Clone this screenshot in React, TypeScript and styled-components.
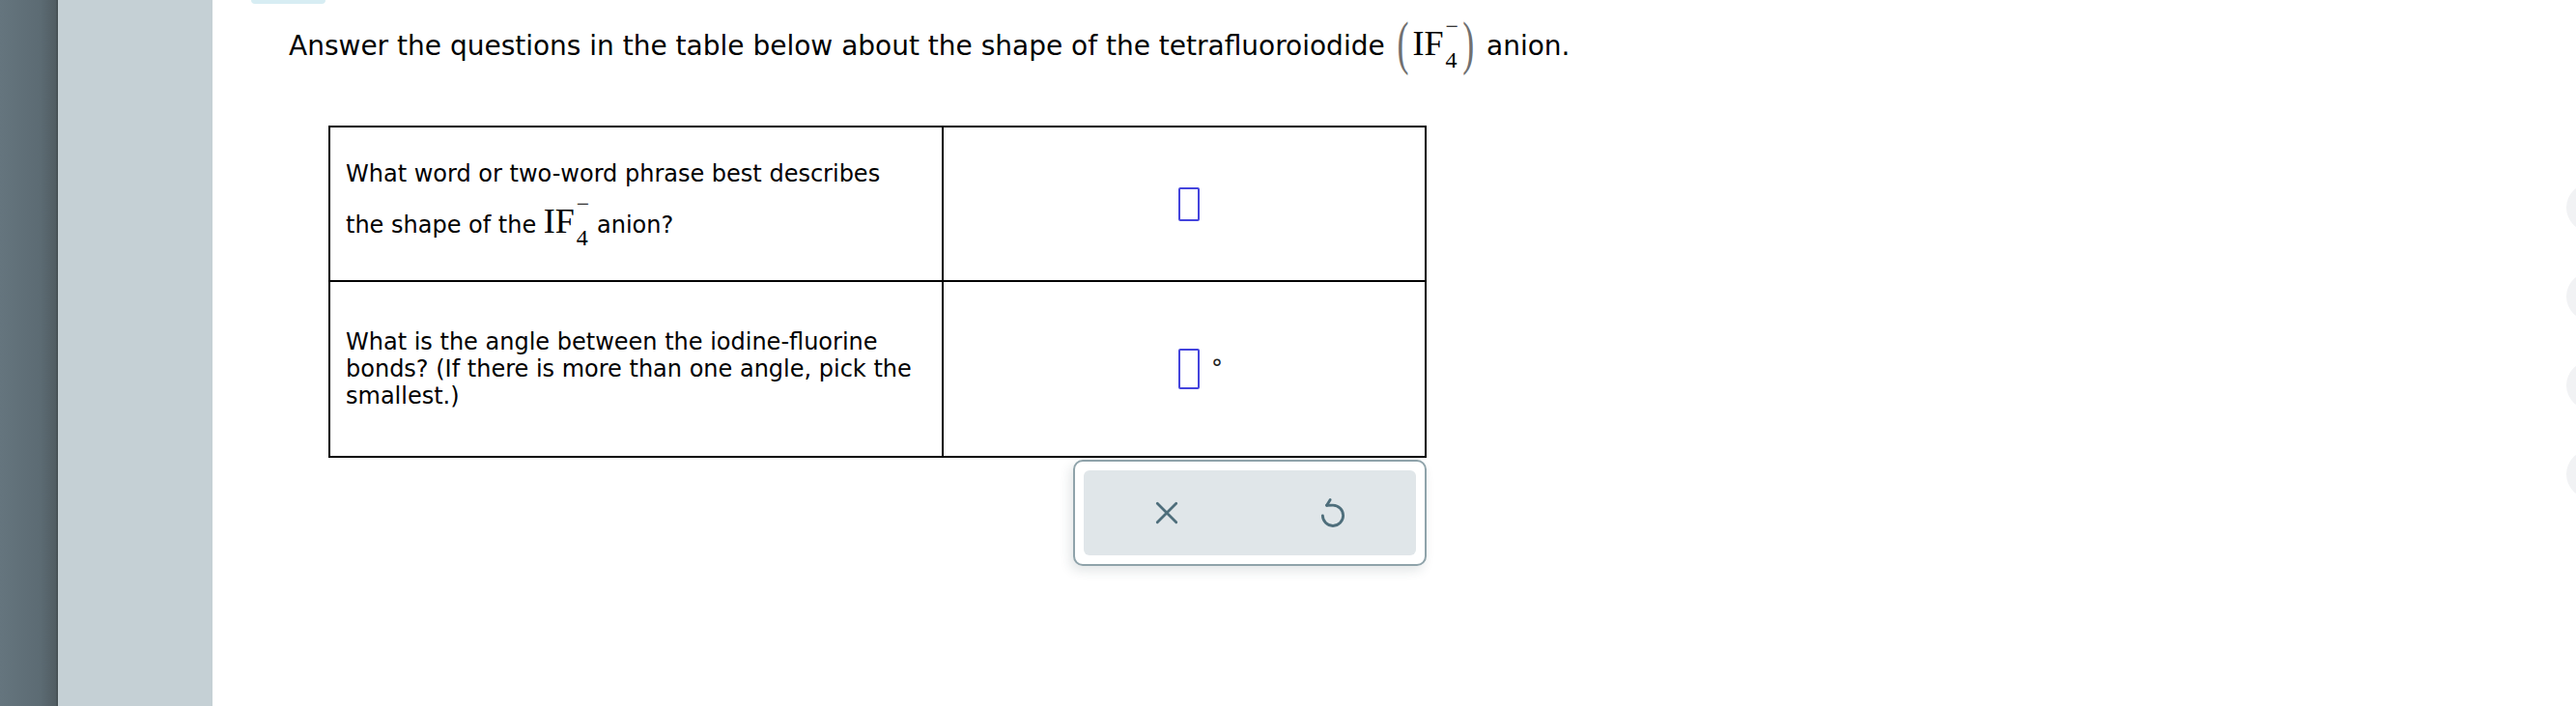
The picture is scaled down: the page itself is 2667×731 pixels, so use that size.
import styled, { createGlobalStyle } from "styled-components";

const GlobalStyle = createGlobalStyle`
    html, body {
        margin: 0;
        padding: 0;
        background: #fff;
        overflow: hidden;
    }
    body {
        font-family: "DejaVu Sans", Verdana, sans-serif;
        color: #000;
    }
`;

const Page = styled.div`
    display: flex;
    width: 2667px;
    height: 731px;
`;

const Rail = styled.div`
    flex: none;
    width: 60px;
    background: linear-gradient(90deg, #65757e 0%, #5c6b73 70%, #515d63 96%, #40494d 100%);
`;

const SidePanel = styled.aside`
    flex: none;
    width: 160px;
    background: #c5d0d5;
`;

const Main = styled.main`
    flex: 1;
    min-width: 0;
    display: flex;
    flex-direction: column;
    align-items: flex-start;
`;

const TopTab = styled.div`
    margin-left: 40px;
    width: 77px;
    height: 4px;
    background: #d7edf3;
    border-radius: 0 0 10px 10px;
`;

const Prompt = styled.p`
    margin: 6px 0 0 79px;
    font-size: 28px;
    line-height: 33px;
`;

const Chem = styled.span`
    font-family: "Liberation Serif", "Times New Roman", serif;
    font-size: 36px;
    white-space: nowrap;
`;

const Paren = styled.span`
    display: inline-block;
    color: #707070;
    transform: scaleY(1.7);
    margin: 0 4px;
`;

const Scripts = styled.span`
    display: inline-block;
    vertical-align: -13px;
    margin-left: 2px;
    padding-top: 6px;
    font-size: 24px;
    line-height: 22px;
`;

const Charge = styled.span`
    display: block;
    margin-bottom: 13px;
`;

const Count = styled.span`
    display: block;
`;

const Content = styled.div`
    margin: 57px 0 0 120px;
    width: 1137px;
    display: flex;
    flex-direction: column;
    align-items: flex-end;
`;

const QuestionTable = styled.table`
    width: 1137px;
    border-collapse: collapse;
    table-layout: fixed;
`;

const Row = styled.tr<{ $height: number }>`
    height: ${(p) => p.$height}px;
`;

const QuestionCell = styled.td`
    width: 593px;
    border: 2px solid #000;
    padding: 0 24px 0 16px;
    font-size: 24px;
    line-height: 28px;
    vertical-align: middle;
`;

const AnswerCell = styled.td`
    border: 2px solid #000;
    padding: 0 0 0 10px;
    vertical-align: middle;
`;

const AnswerSlot = styled.div`
    display: grid;
    grid-template-columns: 1fr auto 1fr;
    align-items: center;
    column-gap: 12px;
`;

const Blank = styled.span<{ $tall?: boolean }>`
    grid-column: 2;
    display: block;
    box-sizing: border-box;
    width: 22px;
    height: ${(p) => (p.$tall ? 42 : 35)}px;
    border: 2px solid #4444dd;
    border-radius: 2px;
`;

const Unit = styled.span`
    grid-column: 3;
    justify-self: start;
    font-size: 24px;
    line-height: 24px;
    color: #222;
`;

const Tray = styled.div`
    margin-top: 2px;
    box-sizing: border-box;
    width: 366px;
    padding: 9px;
    border: 2px solid #8fa3aa;
    border-radius: 10px;
    background: #fff;
    box-shadow: -3px 5px 12px rgba(40, 60, 70, 0.13);
`;

const TrayInner = styled.div`
    display: flex;
    height: 88px;
    background: #e0e6e9;
    border-radius: 6px;
`;

const TrayButton = styled.button`
    flex: 1;
    display: flex;
    align-items: center;
    justify-content: center;
    padding: 0;
    border: 0;
    background: transparent;
    color: #4e6e7b;
    cursor: pointer;
`;

const Dock = styled.div`
    flex: none;
    width: 10px;
    overflow: hidden;
    padding-top: 190px;
    display: flex;
    flex-direction: column;
    align-items: flex-start;
    gap: 42px;
`;

const DockDot = styled.span`
    flex: none;
    width: 50px;
    height: 50px;
    border-radius: 50%;
    background: #f1f2f4;
`;

const Formula = () => (
    <Chem>
        IF
        <Scripts>
            <Charge>−</Charge>
            <Count>4</Count>
        </Scripts>
    </Chem>
);

const ClearIcon = () => (
    <svg width="26" height="26" viewBox="0 0 24 24" fill="none" stroke="currentColor" strokeWidth="2.6" strokeLinecap="round">
        <path d="M3 3L21 21M21 3L3 21" />
    </svg>
);

const UndoIcon = () => (
    <svg width="34" height="34" viewBox="0 0 24 24" fill="none" stroke="currentColor" strokeWidth="2" strokeLinecap="round" strokeLinejoin="round">
        <path d="M4.5 14A7.5 7.5 0 1 0 12 6.5H7.5" />
        <path d="M10 2.5L7.5 6.5" />
    </svg>
);

const App = () => {
    return (
        <>
            <GlobalStyle />
            <Page>
                <Rail />
                <SidePanel />
                <Main>
                    <TopTab />
                    <Prompt>
                        Answer the questions in the table below about the shape of the tetrafluoroiodide{' '}
                        <Chem>
                            <Paren>(</Paren>
                            <Formula />
                            <Paren>)</Paren>
                        </Chem>{' '}
                        anion.
                    </Prompt>
                    <Content>
                        <QuestionTable>
                            <tbody>
                                <Row $height={160}>
                                    <QuestionCell>
                                        What word or two-word phrase best describes the shape of the <Formula /> anion?
                                    </QuestionCell>
                                    <AnswerCell>
                                        <AnswerSlot>
                                            <Blank />
                                        </AnswerSlot>
                                    </AnswerCell>
                                </Row>
                                <Row $height={182}>
                                    <QuestionCell>
                                        What is the angle between the iodine-fluorine bonds? (If there is more than one angle, pick the smallest.)
                                    </QuestionCell>
                                    <AnswerCell>
                                        <AnswerSlot>
                                            <Blank $tall />
                                            <Unit>°</Unit>
                                        </AnswerSlot>
                                    </AnswerCell>
                                </Row>
                            </tbody>
                        </QuestionTable>
                        <Tray>
                            <TrayInner>
                                <TrayButton aria-label="Clear">
                                    <ClearIcon />
                                </TrayButton>
                                <TrayButton aria-label="Undo">
                                    <UndoIcon />
                                </TrayButton>
                            </TrayInner>
                        </Tray>
                    </Content>
                </Main>
                <Dock>
                    <DockDot />
                    <DockDot />
                    <DockDot />
                    <DockDot />
                </Dock>
            </Page>
        </>
    );
};

export default App;
